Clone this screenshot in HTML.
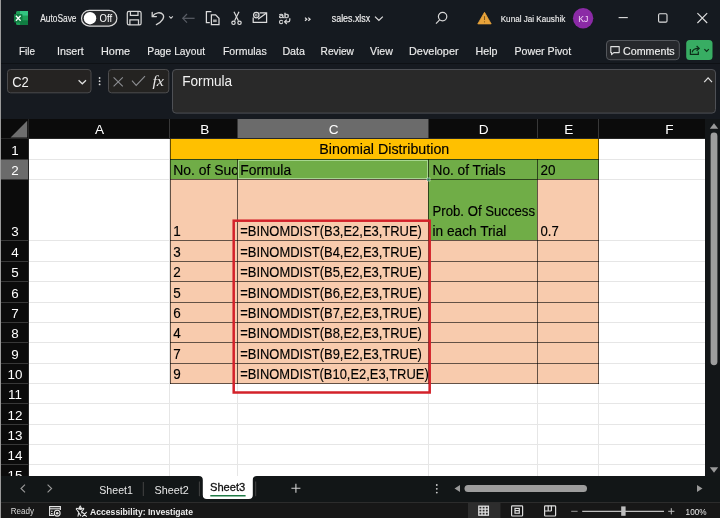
<!DOCTYPE html>
<html><head><meta charset="utf-8"><title>sales.xlsx - Excel</title>
<style>html,body{margin:0;padding:0;width:720px;height:518px;overflow:hidden;background:#151a20;font-family:"Liberation Sans",sans-serif}svg{display:block;will-change:transform}</style>
</head><body>
<svg width="720" height="518" viewBox="0 0 720 518" font-family="Liberation Sans"><rect x="0" y="0" width="720" height="518" fill="#151a20"/>
<rect x="0" y="63" width="720" height="56" fill="#161a20"/>
<path d="M0 63.5 H720" stroke="#0e1115" stroke-width="1"/>
<rect x="16" y="11" width="12" height="14" rx="1.5" fill="#1e9e58"/>
<rect x="20" y="11" width="8" height="4.6" fill="#33c481"/>
<rect x="20" y="20.4" width="8" height="4.6" fill="#107c41"/>
<rect x="14" y="14" width="8.5" height="8.5" rx="1" fill="#107c41"/>
<path d="M15.9 15.8 L20.6 20.8 M20.6 15.8 L15.9 20.8" stroke="#fff" stroke-width="1.3"/>
<text x="40.2" y="22" font-size="10" fill="#ececec" stroke="#ececec" stroke-width="0.12" textLength="36.3" lengthAdjust="spacingAndGlyphs" >AutoSave</text>
<rect x="81.5" y="10.3" width="35.4" height="15.8" rx="7.9" fill="#26282b" stroke="#d8d8d8" stroke-width="1.2"/>
<circle cx="90" cy="18.2" r="6.2" fill="#ffffff"/>
<text x="99.6" y="21.8" font-size="10.8" fill="#ffffff" textLength="12.6" lengthAdjust="spacingAndGlyphs" >Off</text>
<g fill="none" stroke="#d4d4d4" stroke-width="1.25"><rect x="127.3" y="11.3" width="13.8" height="13.6" rx="1.6"/><path d="M130.4 11.3 V15.3 H138 V11.3"/><path d="M129.9 24.9 V19.9 H138.5 V24.9"/></g>
<g fill="none" stroke="#d4d4d4" stroke-width="1.3" stroke-linecap="round"><path d="M152.2 12.4 V16.6 H156.4"/><path d="M152.6 16.2 C155 12.4 160.8 11.6 163 14.6 C164.8 17.2 162.6 21.4 156.4 24.6"/></g>
<path d="M169.2 16.4 l1.8 1.9 l1.8 -1.9" fill="none" stroke="#d4d4d4" stroke-width="1.1"/>
<g fill="none" stroke="#5a5e66" stroke-width="1.2"><path d="M182.8 18.3 h11.8"/><path d="M187 14 l-4.2 4.3 l4.2 4.3"/></g>
<g fill="none" stroke="#dcdcdc" stroke-width="1.25"><path d="M211.4 11.7 H206.4 V22.5 H209.8"/><path d="M211.4 14.9 H215.6 L219 18.3 V24.6 H211.4 Z"/></g>
<rect x="213.1" y="19.5" width="3.6" height="2.6" fill="#a8a8a8"/>
<g fill="none" stroke="#dcdcdc" stroke-width="1.2"><path d="M234 11.8 L238.4 20.8"/><path d="M239 11.8 L234.6 20.8"/><circle cx="233.5" cy="22.8" r="1.7"/><circle cx="239.5" cy="22.8" r="1.7"/></g>
<g fill="none" stroke="#dcdcdc" stroke-width="1.25"><path d="M259.6 12.8 H266.6 V22.3 H253.2 V17.6"/><path d="M258 19.2 L266.2 13.2"/><circle cx="256.3" cy="15.1" r="2.7"/></g>
<circle cx="256.3" cy="15.1" r="0.9" fill="none" stroke="#dcdcdc" stroke-width="0.8"/>
<text x="278.8" y="17.6" font-size="7.2" fill="#dcdcdc" stroke="#dcdcdc" stroke-width="0.3" textLength="10.2" lengthAdjust="spacingAndGlyphs">ab</text>
<text x="278.8" y="23.6" font-size="8" fill="#dcdcdc" stroke="#dcdcdc" stroke-width="0.3" textLength="4.4" lengthAdjust="spacingAndGlyphs">c</text>
<g fill="none" stroke="#dcdcdc" stroke-width="1.2"><path d="M289.8 18.2 V20.2 C289.8 21.4 289 21.8 288 21.8 H284.8"/><path d="M286.8 19.6 L284.6 21.8 L286.8 24"/></g>
<path d="M305 17.6 l1.8 1.6 l-1.8 1.6 M308.3 17.6 l1.8 1.6 l-1.8 1.6" fill="none" stroke="#e0e0e0" stroke-width="1.2"/>
<text x="331.8" y="22" font-size="10" fill="#f0f0f0" stroke="#f0f0f0" stroke-width="0.15" textLength="38.4" lengthAdjust="spacingAndGlyphs" >sales.xlsx</text>
<path d="M375 16.6 l3.9 3.8 l3.9 -3.8" fill="none" stroke="#e0e0e0" stroke-width="1.2"/>
<g fill="none" stroke="#d8d8d8" stroke-width="1.2"><circle cx="442.6" cy="16.6" r="4.2"/><path d="M439.6 19.8 L436 23.6"/></g>
<path d="M484.5 12.3 L491.2 23.9 H477.8 Z" fill="#e8a33a" stroke="#e8a33a" stroke-width="0.8" stroke-linejoin="round"/>
<path d="M484.5 16.2 v3.8" stroke="#7a5418" stroke-width="1.1"/><circle cx="484.5" cy="21.8" r="0.6" fill="#7a5418"/>
<text x="500.7" y="21.6" font-size="9.4" fill="#f0f0f0" stroke="#f0f0f0" stroke-width="0.12" textLength="64.6" lengthAdjust="spacingAndGlyphs" >Kunal Jai Kaushik</text>
<circle cx="583.1" cy="18.2" r="10.2" fill="#8b2aa6"/>
<text x="583.3" y="21.6" font-size="9.2" fill="#f0d6f4" textLength="10.2" lengthAdjust="spacingAndGlyphs" text-anchor="middle" >KJ</text>
<path d="M618.6 17.6 h9.2" stroke="#e0e0e0" stroke-width="1.1"/>
<rect x="658.6" y="13.7" width="8.4" height="8.4" rx="1.2" fill="none" stroke="#e0e0e0" stroke-width="1.1"/>
<path d="M697.4 13.2 L707.2 23 M707.2 13.2 L697.4 23" stroke="#e0e0e0" stroke-width="1.1"/>
<text x="19" y="54.8" font-size="11" fill="#ececec" stroke="#ececec" stroke-width="0.15" textLength="16" lengthAdjust="spacingAndGlyphs" >File</text>
<text x="57" y="54.8" font-size="11" fill="#ececec" stroke="#ececec" stroke-width="0.15" textLength="26.8" lengthAdjust="spacingAndGlyphs" >Insert</text>
<text x="101" y="54.8" font-size="11" fill="#ececec" stroke="#ececec" stroke-width="0.15" textLength="29" lengthAdjust="spacingAndGlyphs" >Home</text>
<text x="147.3" y="54.8" font-size="11" fill="#ececec" stroke="#ececec" stroke-width="0.15" textLength="57.7" lengthAdjust="spacingAndGlyphs" >Page Layout</text>
<text x="222.9" y="54.8" font-size="11" fill="#ececec" stroke="#ececec" stroke-width="0.15" textLength="43.8" lengthAdjust="spacingAndGlyphs" >Formulas</text>
<text x="282.4" y="54.8" font-size="11" fill="#ececec" stroke="#ececec" stroke-width="0.15" textLength="22.6" lengthAdjust="spacingAndGlyphs" >Data</text>
<text x="320.6" y="54.8" font-size="11" fill="#ececec" stroke="#ececec" stroke-width="0.15" textLength="33.3" lengthAdjust="spacingAndGlyphs" >Review</text>
<text x="370" y="54.8" font-size="11" fill="#ececec" stroke="#ececec" stroke-width="0.15" textLength="22.8" lengthAdjust="spacingAndGlyphs" >View</text>
<text x="409" y="54.8" font-size="11" fill="#ececec" stroke="#ececec" stroke-width="0.15" textLength="49.6" lengthAdjust="spacingAndGlyphs" >Developer</text>
<text x="475.5" y="54.8" font-size="11" fill="#ececec" stroke="#ececec" stroke-width="0.15" textLength="22" lengthAdjust="spacingAndGlyphs" >Help</text>
<text x="514.5" y="54.8" font-size="11" fill="#ececec" stroke="#ececec" stroke-width="0.15" textLength="56.7" lengthAdjust="spacingAndGlyphs" >Power Pivot</text>
<rect x="606.5" y="40.5" width="72.8" height="19.2" rx="3.5" fill="#26282c" stroke="#54575c" stroke-width="1"/>
<path d="M610.8 46.6 h8.4 v6 h-5.4 l-2.2 2 v-2 h-0.8 z" fill="none" stroke="#e0e0e0" stroke-width="1.1" stroke-linejoin="round"/>
<text x="623" y="54.8" font-size="11" fill="#f0f0f0" stroke="#f0f0f0" stroke-width="0.15" textLength="51.7" lengthAdjust="spacingAndGlyphs" >Comments</text>
<rect x="686.2" y="40" width="26.3" height="20" rx="3.5" fill="#38ad63"/>
<g fill="none" stroke="#0d2e18" stroke-width="1.2"><path d="M690.4 49 V54.3 H698.3 V51.4"/><path d="M692.2 52.4 C692.6 49.6 694.6 48.4 698.6 48.4"/><path d="M696.6 46 L699.2 48.4 L696.6 50.8"/><path d="M704.4 49.2 L706.6 51.4 L708.8 49.2"/></g>
<rect x="7.5" y="69.5" width="83.5" height="23.3" rx="3" fill="#252322" stroke="#4b4b4d" stroke-width="1"/>
<text x="12.2" y="87" font-size="14.6" fill="#f2f2f2" textLength="16.6" lengthAdjust="spacingAndGlyphs" >C2</text>
<path d="M78.6 80.2 l3.7 3.6 l3.7 -3.6" fill="none" stroke="#e0e0e0" stroke-width="1.2"/>
<circle cx="99.6" cy="78" r="0.9" fill="#d8d8d8"/>
<circle cx="99.6" cy="81.2" r="0.9" fill="#d8d8d8"/>
<circle cx="99.6" cy="84.4" r="0.9" fill="#d8d8d8"/>
<rect x="108.5" y="69.5" width="60.3" height="23.3" rx="3" fill="#242321" stroke="#4d4d4f" stroke-width="1"/>
<path d="M113.6 77.4 L122.8 86.4 M122.8 77.4 L113.6 86.4" stroke="#8c8e92" stroke-width="1.1"/>
<path d="M132 80.6 L136.2 85.4 L145 76.2" fill="none" stroke="#8c8e92" stroke-width="1.1"/>
<text x="152.4" y="86" font-family="Liberation Serif" font-style="italic" font-size="14.4" fill="#e8e8e8" textLength="11.6" lengthAdjust="spacingAndGlyphs">fx</text>
<rect x="172.5" y="69.5" width="543" height="43.6" rx="3.5" fill="#292929" stroke="#4e5055" stroke-width="1"/>
<text x="182.2" y="86.4" font-size="13.8" fill="#f2f2f2" textLength="50" lengthAdjust="spacingAndGlyphs" >Formula</text>
<path d="M704.2 82.2 l3.9 -4.4 l3.9 4.4" fill="none" stroke="#e0e0e0" stroke-width="1.2"/>
<rect x="29" y="139" width="676" height="337" fill="#ffffff"/>
<path d="M29 159.5 H705" stroke="#e6e6e6" stroke-width="1"/>
<path d="M29 179.5 H705" stroke="#e6e6e6" stroke-width="1"/>
<path d="M29 240.5 H705" stroke="#e6e6e6" stroke-width="1"/>
<path d="M29 261.5 H705" stroke="#e6e6e6" stroke-width="1"/>
<path d="M29 281.5 H705" stroke="#e6e6e6" stroke-width="1"/>
<path d="M29 302.5 H705" stroke="#e6e6e6" stroke-width="1"/>
<path d="M29 322.5 H705" stroke="#e6e6e6" stroke-width="1"/>
<path d="M29 342.5 H705" stroke="#e6e6e6" stroke-width="1"/>
<path d="M29 363.5 H705" stroke="#e6e6e6" stroke-width="1"/>
<path d="M29 383.5 H705" stroke="#e6e6e6" stroke-width="1"/>
<path d="M29 403.5 H705" stroke="#e6e6e6" stroke-width="1"/>
<path d="M29 424.5 H705" stroke="#e6e6e6" stroke-width="1"/>
<path d="M29 444.5 H705" stroke="#e6e6e6" stroke-width="1"/>
<path d="M29 464.5 H705" stroke="#e6e6e6" stroke-width="1"/>
<path d="M169.5 139 V476" stroke="#e6e6e6" stroke-width="1"/>
<path d="M237.5 139 V476" stroke="#e6e6e6" stroke-width="1"/>
<path d="M428.5 139 V476" stroke="#e6e6e6" stroke-width="1"/>
<path d="M537.5 139 V476" stroke="#e6e6e6" stroke-width="1"/>
<path d="M598.5 139 V476" stroke="#e6e6e6" stroke-width="1"/>
<rect x="1" y="119" width="704" height="20" fill="#0b0b0b"/>
<rect x="1" y="139" width="28" height="337" fill="#0b0b0b"/>
<rect x="238" y="119" width="190" height="19" fill="#6b6b6b"/>
<rect x="1" y="160" width="28" height="19" fill="#6b6b6b"/>
<path d="M27.2 120.8 V137.6 H10.6 Z" fill="#6e6e6e"/>
<path d="M169.5 119 V138" stroke="#383838" stroke-width="1"/>
<path d="M237.5 119 V138" stroke="#383838" stroke-width="1"/>
<path d="M428.5 119 V138" stroke="#383838" stroke-width="1"/>
<path d="M537.5 119 V138" stroke="#383838" stroke-width="1"/>
<path d="M598.5 119 V138" stroke="#383838" stroke-width="1"/>
<path d="M1 159.5 H28" stroke="#383838" stroke-width="1"/>
<path d="M1 179.5 H28" stroke="#383838" stroke-width="1"/>
<path d="M1 240.5 H28" stroke="#383838" stroke-width="1"/>
<path d="M1 261.5 H28" stroke="#383838" stroke-width="1"/>
<path d="M1 281.5 H28" stroke="#383838" stroke-width="1"/>
<path d="M1 302.5 H28" stroke="#383838" stroke-width="1"/>
<path d="M1 322.5 H28" stroke="#383838" stroke-width="1"/>
<path d="M1 342.5 H28" stroke="#383838" stroke-width="1"/>
<path d="M1 363.5 H28" stroke="#383838" stroke-width="1"/>
<path d="M1 383.5 H28" stroke="#383838" stroke-width="1"/>
<path d="M1 403.5 H28" stroke="#383838" stroke-width="1"/>
<path d="M1 424.5 H28" stroke="#383838" stroke-width="1"/>
<path d="M1 444.5 H28" stroke="#383838" stroke-width="1"/>
<path d="M1 464.5 H28" stroke="#383838" stroke-width="1"/>
<path d="M1 138.5 H705" stroke="#262626" stroke-width="1"/>
<path d="M28.5 119 V476" stroke="#262626" stroke-width="1"/>
<text x="99.5" y="134.3" font-size="13.6" fill="#ffffff" text-anchor="middle" >A</text>
<text x="204.7" y="134.3" font-size="13.6" fill="#ffffff" text-anchor="middle" >B</text>
<text x="333.7" y="134.3" font-size="13.6" fill="#ffffff" text-anchor="middle" >C</text>
<text x="483.7" y="134.3" font-size="13.6" fill="#ffffff" text-anchor="middle" >D</text>
<text x="568.7" y="134.3" font-size="13.6" fill="#ffffff" text-anchor="middle" >E</text>
<text x="669.3" y="134.3" font-size="13.6" fill="#ffffff" text-anchor="middle" >F</text>
<text x="15" y="154.8" font-size="13.4" fill="#ffffff" text-anchor="middle" >1</text>
<text x="15" y="174.8" font-size="13.4" fill="#ffffff" text-anchor="middle" >2</text>
<text x="15" y="235.8" font-size="13.4" fill="#ffffff" text-anchor="middle" >3</text>
<text x="15" y="256.8" font-size="13.4" fill="#ffffff" text-anchor="middle" >4</text>
<text x="15" y="276.8" font-size="13.4" fill="#ffffff" text-anchor="middle" >5</text>
<text x="15" y="297.8" font-size="13.4" fill="#ffffff" text-anchor="middle" >6</text>
<text x="15" y="317.8" font-size="13.4" fill="#ffffff" text-anchor="middle" >7</text>
<text x="15" y="337.8" font-size="13.4" fill="#ffffff" text-anchor="middle" >8</text>
<text x="15" y="358.8" font-size="13.4" fill="#ffffff" text-anchor="middle" >9</text>
<text x="15" y="378.8" font-size="13.4" fill="#ffffff" text-anchor="middle" >10</text>
<text x="15" y="398.8" font-size="13.4" fill="#ffffff" text-anchor="middle" >11</text>
<text x="15" y="419.8" font-size="13.4" fill="#ffffff" text-anchor="middle" >12</text>
<text x="15" y="439.8" font-size="13.4" fill="#ffffff" text-anchor="middle" >13</text>
<text x="15" y="459.8" font-size="13.4" fill="#ffffff" text-anchor="middle" >14</text>
<text x="15" y="479.8" font-size="13.4" fill="#ffffff" text-anchor="middle" >15</text>
<rect x="170" y="139" width="429" height="20" fill="#ffc000"/>
<rect x="170" y="159" width="429" height="20" fill="#70ad47"/>
<rect x="170" y="179" width="429" height="205" fill="#f8cbad"/>
<rect x="428" y="179" width="109" height="61" fill="#70ad47"/>
<path d="M170 159.5 H599" stroke="#000" stroke-opacity="0.6" stroke-width="1"/>
<path d="M170 179.5 H599" stroke="#000" stroke-opacity="0.6" stroke-width="1"/>
<path d="M170 240.5 H599" stroke="#000" stroke-opacity="0.6" stroke-width="1"/>
<path d="M170 261.5 H599" stroke="#000" stroke-opacity="0.6" stroke-width="1"/>
<path d="M170 281.5 H599" stroke="#000" stroke-opacity="0.6" stroke-width="1"/>
<path d="M170 302.5 H599" stroke="#000" stroke-opacity="0.6" stroke-width="1"/>
<path d="M170 322.5 H599" stroke="#000" stroke-opacity="0.6" stroke-width="1"/>
<path d="M170 342.5 H599" stroke="#000" stroke-opacity="0.6" stroke-width="1"/>
<path d="M170 363.5 H599" stroke="#000" stroke-opacity="0.6" stroke-width="1"/>
<path d="M170 383.5 H599" stroke="#000" stroke-opacity="0.6" stroke-width="1"/>
<path d="M170.5 139 V384" stroke="#000" stroke-opacity="0.6" stroke-width="1"/>
<path d="M237.5 159 V384" stroke="#000" stroke-opacity="0.6" stroke-width="1"/>
<path d="M428.5 159 V384" stroke="#000" stroke-opacity="0.6" stroke-width="1"/>
<path d="M537.5 159 V384" stroke="#000" stroke-opacity="0.6" stroke-width="1"/>
<path d="M598.5 139 V384" stroke="#000" stroke-opacity="0.6" stroke-width="1"/>
<rect x="238.5" y="160.5" width="189" height="18" fill="none" stroke="#a6d68f" stroke-width="1"/>
<rect x="427" y="178" width="3" height="3" fill="#217346" stroke="#ffffff" stroke-width="0.5"/>
<text x="384.3" y="154.4" font-size="14" fill="#000000" textLength="130" lengthAdjust="spacingAndGlyphs" text-anchor="middle" stroke="#000" stroke-width="0.15">Binomial Distribution</text>
<clipPath id="cb"><rect x="170" y="159" width="67" height="20"/></clipPath>
<text x="173.2" y="174.7" font-size="14" fill="#000000" textLength="72" lengthAdjust="spacingAndGlyphs" stroke="#000" stroke-width="0.15" clip-path="url(#cb)">No. of Succ</text>
<text x="240.2" y="174.7" font-size="14" fill="#000000" textLength="51" lengthAdjust="spacingAndGlyphs" stroke="#000" stroke-width="0.15" >Formula</text>
<text x="432.5" y="174.7" font-size="14" fill="#000000" textLength="73" lengthAdjust="spacingAndGlyphs" stroke="#000" stroke-width="0.15" >No. of Trials</text>
<text x="540.5" y="174.7" font-size="14" fill="#000000" textLength="15" lengthAdjust="spacingAndGlyphs" stroke="#000" stroke-width="0.15" >20</text>
<text x="432.5" y="216.3" font-size="14" fill="#000000" textLength="102.5" lengthAdjust="spacingAndGlyphs" stroke="#000" stroke-width="0.15" >Prob. Of Success</text>
<text x="432.5" y="235.7" font-size="14" fill="#000000" textLength="73.8" lengthAdjust="spacingAndGlyphs" stroke="#000" stroke-width="0.15" >in each Trial</text>
<text x="540.5" y="235.7" font-size="14" fill="#000000" textLength="18.3" lengthAdjust="spacingAndGlyphs" stroke="#000" stroke-width="0.15" >0.7</text>
<text x="173.2" y="235.7" font-size="14" fill="#000000" textLength="7.5" lengthAdjust="spacingAndGlyphs" stroke="#000" stroke-width="0.15" >1</text>
<text x="240.2" y="235.7" font-size="14" fill="#000000" textLength="181.7" lengthAdjust="spacingAndGlyphs" stroke="#000" stroke-width="0.15" >=BINOMDIST(B3,E2,E3,TRUE)</text>
<text x="173.2" y="256.7" font-size="14" fill="#000000" textLength="7.5" lengthAdjust="spacingAndGlyphs" stroke="#000" stroke-width="0.15" >3</text>
<text x="240.2" y="256.7" font-size="14" fill="#000000" textLength="181.7" lengthAdjust="spacingAndGlyphs" stroke="#000" stroke-width="0.15" >=BINOMDIST(B4,E2,E3,TRUE)</text>
<text x="173.2" y="276.7" font-size="14" fill="#000000" textLength="7.5" lengthAdjust="spacingAndGlyphs" stroke="#000" stroke-width="0.15" >2</text>
<text x="240.2" y="276.7" font-size="14" fill="#000000" textLength="181.7" lengthAdjust="spacingAndGlyphs" stroke="#000" stroke-width="0.15" >=BINOMDIST(B5,E2,E3,TRUE)</text>
<text x="173.2" y="297.7" font-size="14" fill="#000000" textLength="7.5" lengthAdjust="spacingAndGlyphs" stroke="#000" stroke-width="0.15" >5</text>
<text x="240.2" y="297.7" font-size="14" fill="#000000" textLength="181.7" lengthAdjust="spacingAndGlyphs" stroke="#000" stroke-width="0.15" >=BINOMDIST(B6,E2,E3,TRUE)</text>
<text x="173.2" y="317.7" font-size="14" fill="#000000" textLength="7.5" lengthAdjust="spacingAndGlyphs" stroke="#000" stroke-width="0.15" >6</text>
<text x="240.2" y="317.7" font-size="14" fill="#000000" textLength="181.7" lengthAdjust="spacingAndGlyphs" stroke="#000" stroke-width="0.15" >=BINOMDIST(B7,E2,E3,TRUE)</text>
<text x="173.2" y="337.7" font-size="14" fill="#000000" textLength="7.5" lengthAdjust="spacingAndGlyphs" stroke="#000" stroke-width="0.15" >4</text>
<text x="240.2" y="337.7" font-size="14" fill="#000000" textLength="181.7" lengthAdjust="spacingAndGlyphs" stroke="#000" stroke-width="0.15" >=BINOMDIST(B8,E2,E3,TRUE)</text>
<text x="173.2" y="358.7" font-size="14" fill="#000000" textLength="7.5" lengthAdjust="spacingAndGlyphs" stroke="#000" stroke-width="0.15" >7</text>
<text x="240.2" y="358.7" font-size="14" fill="#000000" textLength="181.7" lengthAdjust="spacingAndGlyphs" stroke="#000" stroke-width="0.15" >=BINOMDIST(B9,E2,E3,TRUE)</text>
<text x="173.2" y="378.7" font-size="14" fill="#000000" textLength="7.5" lengthAdjust="spacingAndGlyphs" stroke="#000" stroke-width="0.15" >9</text>
<text x="240.2" y="378.7" font-size="14" fill="#000000" textLength="188.5" lengthAdjust="spacingAndGlyphs" stroke="#000" stroke-width="0.15" >=BINOMDIST(B10,E2,E3,TRUE)</text>
<rect x="233.7" y="220.7" width="196" height="171.8" fill="none" stroke="#d3222a" stroke-width="2.5"/>
<rect x="705" y="119" width="15" height="357" fill="#131618"/>
<path d="M714 123.3 L718.2 128.8 H709.8 Z" fill="#9a9a9a"/>
<rect x="710.6" y="132.6" width="6.8" height="232.6" rx="3.4" fill="#9d9d9d"/>
<path d="M709.8 467.2 H718.2 L714 472.8 Z" fill="#9a9a9a"/>
<rect x="0" y="476" width="720" height="26" fill="#121617"/>
<path d="M25 484.6 l-4 3.9 l4 3.9 M47.6 484.6 l4 3.9 l-4 3.9" fill="none" stroke="#9a9a9a" stroke-width="1.1"/>
<text x="99.3" y="493.8" font-size="11" fill="#e8e8e8" textLength="33.6" lengthAdjust="spacingAndGlyphs" >Sheet1</text>
<path d="M143.3 482 V496" stroke="#444" stroke-width="1"/>
<text x="154.5" y="493.8" font-size="11" fill="#e8e8e8" textLength="34.2" lengthAdjust="spacingAndGlyphs" >Sheet2</text>
<path d="M199.4 481.5 V496.2 M255.7 481.5 V496.2" stroke="#444" stroke-width="1"/>
<path d="M198.8 476 Q202.8 476 202.8 480 V495 Q202.8 499 206.8 499 H248.8 Q252.8 499 252.8 495 V480 Q252.8 476 256.8 476 Z" fill="#ffffff"/>
<text x="210" y="491" font-size="11.8" fill="#111111" stroke="#111111" stroke-width="0.3" textLength="35.3" lengthAdjust="spacingAndGlyphs" >Sheet3</text>
<path d="M210.3 495.7 H245.6" stroke="#1d7a45" stroke-width="1.5"/>
<path d="M291.4 488.3 H300.4 M295.9 483.8 V492.8" stroke="#d0d0d0" stroke-width="1.1"/>
<circle cx="436.8" cy="485" r="0.9" fill="#d0d0d0"/>
<circle cx="436.8" cy="488.8" r="0.9" fill="#d0d0d0"/>
<circle cx="436.8" cy="492.6" r="0.9" fill="#d0d0d0"/>
<path d="M454.5 488.5 L460 485 V492 Z" fill="#9a9a9a"/>
<rect x="464.5" y="485" width="122.5" height="7" rx="3.5" fill="#9d9d9d"/>
<path d="M702.5 488.5 L697 485 V492 Z" fill="#9a9a9a"/>
<rect x="0" y="502" width="720" height="16" fill="#171717"/>
<path d="M0 502.5 H720" stroke="#2c2c2c" stroke-width="1"/>
<text x="10.7" y="514.4" font-size="9" fill="#d8d8d8" textLength="23.3" lengthAdjust="spacingAndGlyphs" >Ready</text>
<g fill="none" stroke="#e4e4e4" stroke-width="1.1"><path d="M54 515.4 H49.6 V506.6 H60.4 V510"/><path d="M49.6 508.8 H60.4"/><path d="M51 511.3 H52.6 M51 513.6 H52.6"/><circle cx="57.2" cy="513.2" r="2.9" fill="#171717"/></g><circle cx="57.2" cy="513.2" r="1.3" fill="#e4e4e4"/>
<g fill="none" stroke="#e4e4e4" stroke-width="1.1" stroke-linecap="round" stroke-linejoin="round"><path d="M78.8 508.4 L80.2 505.9 L81.6 508.4 Z"/><path d="M76.6 509.8 C76 508.6 76.6 507.8 77.4 508.4 C78.4 509.6 81.4 509.6 82.6 508.6 C83.4 507.8 84.2 508.6 83.4 509.6 L81.6 511.4 L82 513"/><path d="M77.4 510.6 L78.8 512.4 L78 516.2 M79.4 513.6 L80.8 515.8"/><path d="M82.6 512.4 L86.4 516.4 M86.4 512.4 L82.6 516.4"/></g>
<text x="90" y="514.5" font-size="9" fill="#ececec" textLength="103" lengthAdjust="spacingAndGlyphs" font-weight="bold" >Accessibility: Investigate</text>
<rect x="468" y="502.3" width="32.5" height="15.7" fill="#2d2d2d"/>
<g fill="none" stroke="#e0e0e0" stroke-width="1.3"><rect x="478.8" y="506.2" width="9.6" height="9"/><path d="M478.8 509.2 H488.4 M478.8 512.2 H488.4 M482 506.2 V515.2 M485.2 506.2 V515.2"/></g>
<g fill="none" stroke="#dcdcdc" stroke-width="1.2"><rect x="511.6" y="505.8" width="11" height="10.2" rx="0.8"/><rect x="515" y="508.4" width="4.3" height="4.8"/><path d="M515 510.6 H519.3"/></g>
<g fill="none" stroke="#dcdcdc" stroke-width="1.2"><rect x="544.6" y="505.8" width="11" height="10.2" rx="0.8"/><path d="M548.2 505.8 V511 M551.4 505.8 V511 M544.6 511 H551.4"/></g>
<path d="M571.2 511.3 H577.6" stroke="#9a9a9a" stroke-width="1"/>
<path d="M582.2 511.3 H664" stroke="#bdbdbd" stroke-width="1.2"/>
<rect x="621.2" y="506.4" width="4.4" height="9.4" fill="#bdbdbd"/>
<path d="M668.2 511.3 H674.4 M671.3 508.2 V514.4" stroke="#bdbdbd" stroke-width="1"/>
<text x="685.6" y="514.6" font-size="9.6" fill="#e8e8e8" textLength="21" lengthAdjust="spacingAndGlyphs" >100%</text>
<path d="M0.5 0 V518" stroke="#9a9a9a" stroke-width="1"/></svg>
</body></html>
